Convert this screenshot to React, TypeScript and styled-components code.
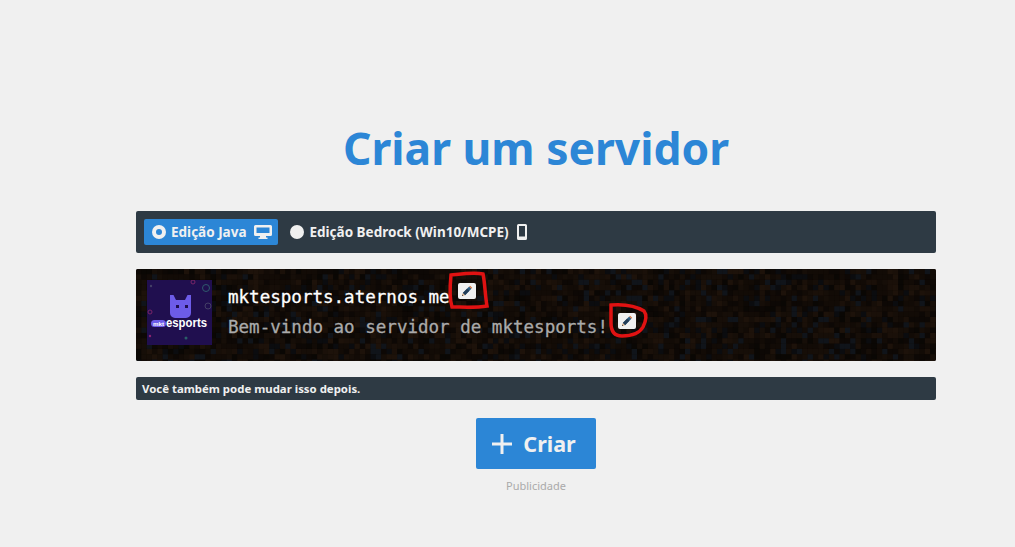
import React from "react";
import styled, { createGlobalStyle } from "styled-components";

const GlobalStyle = createGlobalStyle`
  html, body {
    margin: 0;
    padding: 0;
    height: 100%;
    background: #f0f0f0;
    overflow: hidden;
  }
`;

const Page = styled.div`
  width: 1015px;
  height: 547px;
  padding-top: 119px;
  box-sizing: border-box;
  font-family: "Noto Sans", "Open Sans", sans-serif;
`;

const Container = styled.div`
  width: 800px;
  margin-left: 136px;
  display: flex;
  flex-direction: column;
  align-items: center;
`;

const Title = styled.h1`
  margin: 0 0 33px;
  height: 59px;
  line-height: 59px;
  font-size: 44.4px;
  font-weight: 700;
  color: #2c86d6;
  white-space: nowrap;
`;

const EditionBar = styled.div`
  width: 100%;
  height: 42px;
  box-sizing: border-box;
  padding: 8px;
  display: flex;
  align-items: center;
  gap: 4px;
  background: #2e3a44;
  border-radius: 2px;
  margin-bottom: 16px;
`;

const Edition = styled.div<{ $active?: boolean }>`
  height: 26px;
  padding: 0 6px 0 8px;
  display: flex;
  align-items: center;
  gap: 5px;
  border-radius: 2px;
  background: ${(p) => (p.$active ? "#2c86d6" : "transparent")};
  color: #f0f0f0;
  font-size: 13.5px;
  font-weight: 700;
  white-space: nowrap;
  svg {
    margin-left: 3px;
  }
`;

const Radio = styled.span<{ $checked?: boolean }>`
  width: 14px;
  height: 14px;
  border-radius: 50%;
  background: #f0f0f0;
  display: flex;
  align-items: center;
  justify-content: center;
  &::after {
    content: "";
    width: 6px;
    height: 6px;
    border-radius: 50%;
    background: ${(p) => (p.$checked ? "#2c86d6" : "#f0f0f0")};
  }
`;

const MotdCard = styled.div`
  position: relative;
  width: 100%;
  height: 92px;
  box-sizing: border-box;
  padding: 11px 11px 0;
  display: flex;
  gap: 16px;
  border-radius: 2px;
  overflow: hidden;
  background: #120c07;
  margin-bottom: 16px;
`;

const Dirt = styled.svg`
  position: absolute;
  left: 0;
  top: 0;
`;

const ServerIcon = styled.svg`
  position: relative;
  flex: none;
  width: 65px;
  height: 65px;
`;

const MotdLines = styled.div`
  position: relative;
  display: flex;
  flex-direction: column;
  padding-top: 2px;
  font-family: "DejaVu Sans Mono", "Liberation Mono", monospace;
`;

const MotdLine = styled.div<{ $muted?: boolean }>`
  height: 30px;
  display: flex;
  align-items: center;
  font-size: 17.55px;
  white-space: nowrap;
  -webkit-text-stroke: 0.3px currentColor;
  color: ${(p) => (p.$muted ? "#aaaaaa" : "#ffffff")};
`;

const EditButton = styled.span<{ $gap: number }>`
  width: 18px;
  height: 16px;
  margin-left: ${(p) => p.$gap}px;
  margin-top: -13px;
  display: flex;
  align-items: center;
  justify-content: center;
  background: #f0f0f0;
  border-radius: 2px;
`;

const Scribble = styled.svg`
  position: absolute;
  left: 0;
  top: 0;
  pointer-events: none;
`;

const Notice = styled.div`
  width: 100%;
  height: 23px;
  box-sizing: border-box;
  padding: 0 6px;
  display: flex;
  align-items: center;
  background: #2e3a44;
  border-radius: 2px;
  color: #f0f0f0;
  font-size: 11.4px;
  font-weight: 700;
  margin-bottom: 18px;
`;

const CreateButton = styled.button`
  width: 120px;
  height: 51px;
  border: none;
  padding: 0 4px 0 0;
  border-radius: 2px;
  display: flex;
  align-items: center;
  justify-content: center;
  gap: 11px;
  background: #2c86d6;
  color: #f0f0f0;
  font-family: inherit;
  font-size: 21.5px;
  font-weight: 700;
`;

const AdLabel = styled.div`
  margin-top: 9px;
  font-size: 11px;
  line-height: 16px;
  color: #aaaaaa;
`;

// deterministic noise so the dirt texture is the same every run
function dirtBlocks() {
  const out: React.ReactElement[] = [];
  const colors = [
    "#0d0805", "#0d0805", "#120b06", "#120b06", "#120b06", "#160e08", "#160e08",
    "#1a1009", "#0a0704", "#1d120a", "#0b0c0f", "#10141a",
  ];
  const size = 5.33;
  for (let row = 0; row < 18; row++) {
    for (let col = 0; col < 151; col++) {
      let h = Math.imul(row * 374761393 + col * 668265263, 1274126177);
      h = Math.imul(h ^ (h >>> 13), 1597334677);
      h = (h ^ (h >>> 16)) >>> 0;
      out.push(
        <rect
          key={`${col}-${row}`}
          x={col * size}
          y={row * size}
          width={size + 0.2}
          height={size + 0.2}
          fill={colors[h % colors.length]}
        />
      );
    }
  }
  return out;
}

function Pencil() {
  return (
    <svg width="12" height="12" viewBox="0 0 12 12">
      <path d="M8.2 1.6 L10.4 3.8 L4 10.2 L1.8 8 Z" fill="#2f5f86" />
      <path d="M6.2 3.6 L8.4 5.8 L4 10.2 L1.8 8 Z" fill="#233d57" />
      <path d="M8.2 1.6 L9.2 0.8 L11.2 2.8 L10.4 3.8 Z" fill="#d9773f" />
      <path d="M1.8 8 L4 10.2 L1 11 Z" fill="#e8b98a" />
      <path d="M1.4 9.6 L2.4 10.6 L1 11 Z" fill="#222" />
    </svg>
  );
}

function PlusMark() {
  return (
    <svg width="20" height="20" viewBox="0 0 20 20">
      <path d="M8.5 0 h3 v8.5 h8.5 v3 h-8.5 v8.5 h-3 v-8.5 h-8.5 v-3 h8.5 Z" fill="#f0f0f0" />
    </svg>
  );
}

function DesktopMark() {
  return (
    <svg width="18" height="14" viewBox="0 0 18 14">
      <path
        fillRule="evenodd"
        d="M1.5 0 h15 a1.5 1.5 0 0 1 1.5 1.5 v8 a1.5 1.5 0 0 1-1.5 1.5 h-4.5 v1.5 h1.5 v1.5 h-9 v-1.5 h1.5 v-1.5 h-4.5 a1.5 1.5 0 0 1-1.5-1.5 v-8 a1.5 1.5 0 0 1 1.5-1.5 Z M2.5 2.5 v5.5 h13 v-5.5 Z"
        fill="#f0f0f0"
      />
    </svg>
  );
}

function MobileMark() {
  return (
    <svg width="10" height="16" viewBox="0 0 10 16">
      <path
        fillRule="evenodd"
        d="M1.5 0 h7 a1.5 1.5 0 0 1 1.5 1.5 v13 a1.5 1.5 0 0 1-1.5 1.5 h-7 a1.5 1.5 0 0 1-1.5-1.5 v-13 a1.5 1.5 0 0 1 1.5-1.5 Z M2 2 v10.5 h6 v-10.5 Z"
        fill="#f0f0f0"
      />
    </svg>
  );
}

export default function App() {
  return (
    <Page>
      <GlobalStyle />
      <Container>
        <Title>Criar um servidor</Title>
        <EditionBar>
          <Edition $active>
            <Radio $checked />
            Edição Java
            <DesktopMark />
          </Edition>
          <Edition>
            <Radio />
            Edição Bedrock (Win10/MCPE)
            <MobileMark />
          </Edition>
        </EditionBar>
        <MotdCard>
          <Dirt width="800" height="92">{dirtBlocks()}</Dirt>
          <ServerIcon viewBox="0 0 65 65">
            <rect width="65" height="65" fill="#200f4f" />
            <path d="M23 15 h3.5 l2.5 5 h9 l2.5-5 h3.5 v18 a5 5 0 0 1-5 5 h-11 a5 5 0 0 1-5-5 Z" fill="#6d5ce8" />
            <rect x="29" y="25" width="3" height="3" fill="#200f4f" />
            <rect x="38" y="25" width="3" height="3" fill="#200f4f" />
            <rect x="4" y="40" width="15" height="7" rx="3.5" fill="#6d5ce8" />
            <text x="6" y="45.5" fontSize="5.5" fontWeight="700" fill="#fff" fontFamily="Liberation Sans, sans-serif" textLength="11" lengthAdjust="spacingAndGlyphs">mkt</text>
            <text x="19" y="47" fontSize="13" fontWeight="700" fill="#fff" fontFamily="Liberation Sans, sans-serif" textLength="41" lengthAdjust="spacingAndGlyphs">esports</text>
            <circle cx="59" cy="8" r="3.5" fill="none" stroke="#2f5a6c" strokeWidth="1" />
            <circle cx="61" cy="26" r="3" fill="none" stroke="#443f66" strokeWidth="1" />
            <circle cx="46" cy="2" r="2" fill="none" stroke="#7a2468" strokeWidth="1" />
            <circle cx="3" cy="32" r="2" fill="none" stroke="#7a2468" strokeWidth="1" />
            <circle cx="39" cy="58" r="1.5" fill="#2a5f68" />
            <circle cx="3" cy="56" r="1.2" fill="#8c2470" />
            <circle cx="4" cy="6" r="1.2" fill="#443f66" />
          </ServerIcon>
          <MotdLines>
            <MotdLine>
              mktesports.aternos.me
              <EditButton $gap={8}><Pencil /></EditButton>
            </MotdLine>
            <MotdLine $muted>
              Bem-vindo ao servidor de mktesports!
              <EditButton $gap={10}><Pencil /></EditButton>
            </MotdLine>
          </MotdLines>
          <Scribble width="800" height="92" viewBox="0 0 800 92">
            <path d="M315 6 C325 5 338 3 347 5 C349 14 349 26 351 37 C340 39 326 38 316 38 C313 28 314 16 315 6 Z" fill="none" stroke="#e01212" strokeWidth="3.5" strokeLinecap="round" />
            <path d="M475 36 C488 35 500 37 508 42 C511 46 510 52 507 58 C503 65 496 67 486 67 C478 67 475 62 475 54 Z" fill="none" stroke="#e01212" strokeWidth="3.5" strokeLinecap="round" />
          </Scribble>
        </MotdCard>
        <Notice>Você também pode mudar isso depois.</Notice>
        <CreateButton>
          <PlusMark />
          Criar
        </CreateButton>
        <AdLabel>Publicidade</AdLabel>
      </Container>
    </Page>
  );
}
